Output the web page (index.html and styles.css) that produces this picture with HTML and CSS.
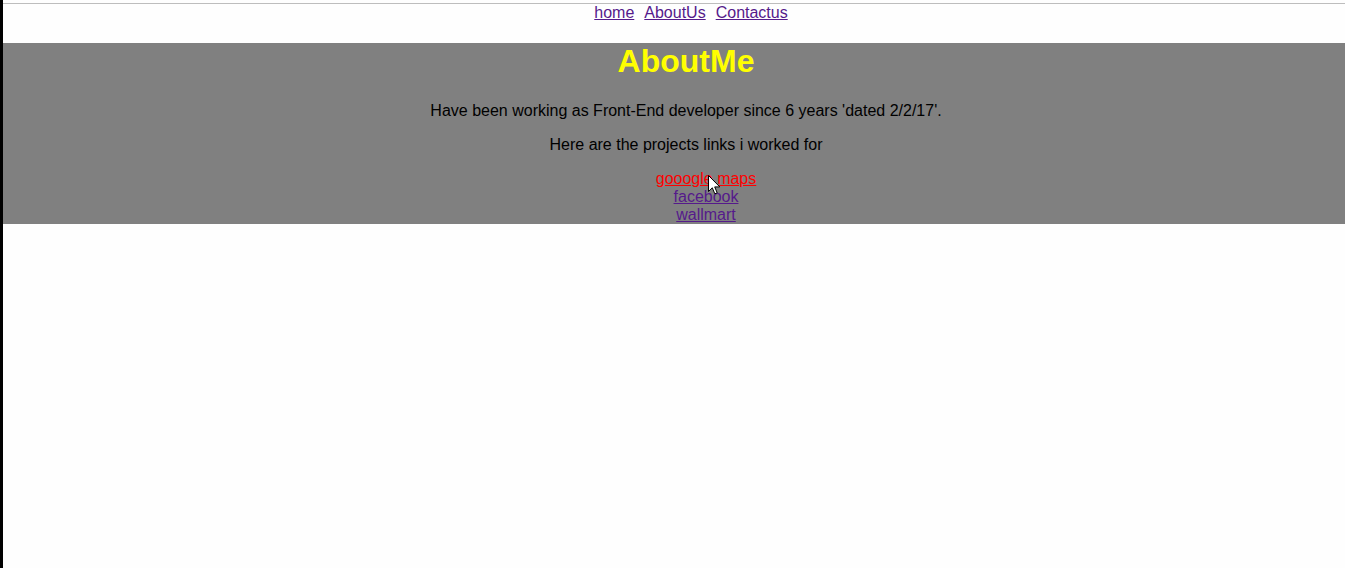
FILE: index.html
```html
<!DOCTYPE html>
<html>
<head>
<meta charset="utf-8">
<title>AboutMe</title>
<link rel="stylesheet" href="styles.css">
</head>
<body>
<div class="page">
  <nav class="nav">
    <a href="#" class="visited">home</a>
    <a href="#" class="visited">AboutUs</a>
    <a href="#" class="visited">Contactus</a>
  </nav>
  <section class="about">
    <h1 class="title">AboutMe</h1>
    <p class="text">Have been working as Front-End developer since 6 years 'dated 2/2/17'.</p>
    <p class="text">Here are the projects links i worked for</p>
    <ul class="projects">
      <li><a href="#" class="hover">gooogle maps</a></li>
      <li><a href="#" class="visited">facebook</a></li>
      <li><a href="#" class="visited">wallmart</a></li>
    </ul>
  </section>
</div>
<svg class="cursor" width="13" height="21" viewBox="0 0 13 21" xmlns="http://www.w3.org/2000/svg">
  <path d="M0.5 0.5 L0.5 16.5 L4.3 12.8 L6.8 18.8 L9.2 17.8 L6.7 11.9 L11.8 11.9 Z" fill="#fff" stroke="#000" stroke-width="1" stroke-linejoin="miter"/>
</svg>
</body>
</html>
```
FILE: styles.css
```css
html {
  overflow: hidden;
}
body {
  margin: 0;
  min-height: 100vh;
  box-sizing: border-box;
  border-left: 3px solid #000;
  background: #fefefe;
  font-family: "Liberation Sans", Arial, sans-serif;
  font-size: 16px;
  color: #000;
}
.page {
  width: 1366px;
  padding-top: 3px;
}
.nav {
  border-top: 1px solid #bdbdbd;
  display: flex;
  justify-content: center;
  height: 40px;
  line-height: 17px;
  box-sizing: border-box;
}
.nav a {
  margin-left: 10px;
}
a.visited {
  color: #551a8b;
}
a.hover {
  color: #ff0000;
}
.about {
  background: #808080;
  padding: 0;
  text-align: center;
  display: flow-root;
}
.title {
  margin: 0 0 22px;
  font-size: 32px;
  font-weight: bold;
  color: #ffff00;
  line-height: 37px;
}
.text {
  margin: 0 0 16px;
  line-height: 18px;
}
.projects {
  list-style: none;
  margin: 0;
  padding: 0 0 0 40px;
  line-height: 18px;
}
.cursor {
  position: absolute;
  left: 708px;
  top: 175px;
}
```
